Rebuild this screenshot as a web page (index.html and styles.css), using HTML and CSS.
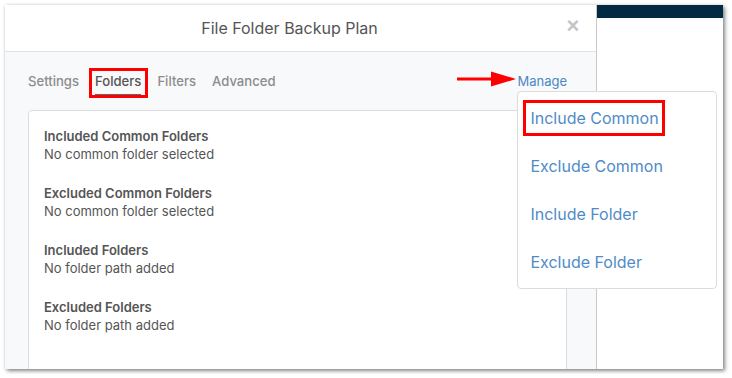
FILE: index.html
```html
<!DOCTYPE html>
<html lang="en">
<head>
  <meta charset="UTF-8">
  <meta name="viewport" content="width=device-width, initial-scale=1.0">
  <title>File Folder Backup Plan</title>
  <link rel="stylesheet" href="styles.css">
</head>
<body>
  <div class="frame">
    <div class="modal">
      <div class="modal-header">
        <h1 class="modal-title">File Folder Backup Plan</h1>
        <button class="close" type="button">&times;</button>
      </div>
      <div class="modal-body">
        <div class="tabs-row">
          <nav class="tabs">
            <a class="tab">Settings</a>
            <a class="tab active marked">Folders</a>
            <a class="tab">Filters</a>
            <a class="tab">Advanced</a>
          </nav>
          <div class="manage">
            <svg class="pointer" width="60" height="16" viewBox="0 0 60 16">
              <line x1="1" y1="8" x2="38" y2="8" stroke="#f00" stroke-width="3"/>
              <polygon points="35,0.5 60,8 35,15.5" fill="#f00"/>
            </svg>
            <a class="manage-link">Manage</a>
            <ul class="menu">
              <li><a class="menu-item"><span class="marked">Include Common</span></a></li>
              <li><a class="menu-item">Exclude Common</a></li>
              <li><a class="menu-item">Include Folder</a></li>
              <li><a class="menu-item">Exclude Folder</a></li>
            </ul>
          </div>
        </div>
        <div class="card">
          <div class="group">
            <div class="group-title">Included Common Folders</div>
            <div class="group-text">No common folder selected</div>
          </div>
          <div class="group">
            <div class="group-title">Excluded Common Folders</div>
            <div class="group-text">No common folder selected</div>
          </div>
          <div class="group">
            <div class="group-title">Included Folders</div>
            <div class="group-text">No folder path added</div>
          </div>
          <div class="group">
            <div class="group-title">Excluded Folders</div>
            <div class="group-text">No folder path added</div>
          </div>
        </div>
      </div>
    </div>
    <div class="side">
      <div class="side-bar"></div>
    </div>
  </div>
</body>
</html>
```

FILE: styles.css
```css
body {
  margin: 0;
  background: #fff;
  font-family: Inter, "Noto Sans", sans-serif;
}

.frame {
  position: relative;
  display: flex;
  width: 718px;
  height: 364px;
  margin: 5px;
  overflow: hidden;
  background: #fff;
  box-shadow: 2px 2px 4px rgba(0, 0, 0, 0.45), 0 0 3px rgba(0, 0, 0, 0.12);
}

.modal {
  display: flex;
  flex-direction: column;
  flex: none;
  width: 591px;
  border-right: 1px solid #c9c9c9;
  background: #f8f9fb;
}

.modal-header {
  flex: none;
  display: flex;
  align-items: center;
  height: 46px;
  padding: 0 5px 0 24px;
  background: #fff;
  border-bottom: 1px solid #e3e3e3;
}

.modal-title {
  flex: 1;
  margin: 0 5px 0 0;
  font-size: 16px;
  font-weight: 400;
  color: #555;
  text-align: center;
}

.close {
  width: 36px;
  padding: 0 0 4px;
  border: none;
  background: none;
  font-family: Arial, "Liberation Sans", sans-serif;
  font-size: 22px;
  font-weight: 700;
  color: #c4c4c4;
  line-height: 1;
}

.modal-body {
  flex: none;
  padding: 20px 29px 0 23px;
}

.tabs-row {
  display: flex;
  justify-content: space-between;
  align-items: flex-start;
}

.tabs {
  display: flex;
  gap: 16px;
}

.tab {
  position: relative;
  padding-bottom: 4px;
  border-bottom: 2px solid transparent;
  font-size: 13.1px;
  font-weight: 500;
  line-height: 18px;
  color: #8c8c8c;
}

.tab.active {
  color: #555;
  border-bottom-color: #666;
}

.tab.marked::after {
  content: "";
  position: absolute;
  top: -4px;
  bottom: -4px;
  left: -6px;
  right: -7px;
  border: 3px solid #f00;
}

.manage {
  position: relative;
  margin-top: -2px;
  z-index: 2;
}

.pointer {
  position: absolute;
  right: calc(100% + 1px);
  top: 1px;
}

.manage-link {
  font-size: 13px;
  line-height: 18px;
  color: #4a87c6;
}

.menu {
  position: absolute;
  top: 21px;
  left: 0;
  width: 198px;
  margin: 0;
  padding: 2px 0;
  list-style: none;
  background: #fff;
  border: 1px solid #dcdcdc;
  border-radius: 4px;
}

.menu-item {
  display: block;
  height: 48px;
  padding: 0 12px;
  font-size: 16px;
  line-height: 48px;
  color: #4f8bc8;
}

.menu-item .marked {
  position: relative;
}

.menu-item .marked::after {
  content: "";
  position: absolute;
  top: -8px;
  bottom: -8px;
  left: -7px;
  right: -6px;
  border: 3px solid #f00;
}

.card {
  height: 290px;
  margin-top: 14px;
  padding: 16px 15px;
  background: #fff;
  border: 1px solid #dcdcdc;
  border-radius: 4px;
}

.group {
  margin-bottom: 21px;
  font-size: 13px;
  line-height: 18px;
  color: #555;
}

.group-title {
  font-weight: 600;
}

.side {
  flex: 1;
  background: #fff;
}

.side-bar {
  height: 13px;
  background: #022a42;
}
```
